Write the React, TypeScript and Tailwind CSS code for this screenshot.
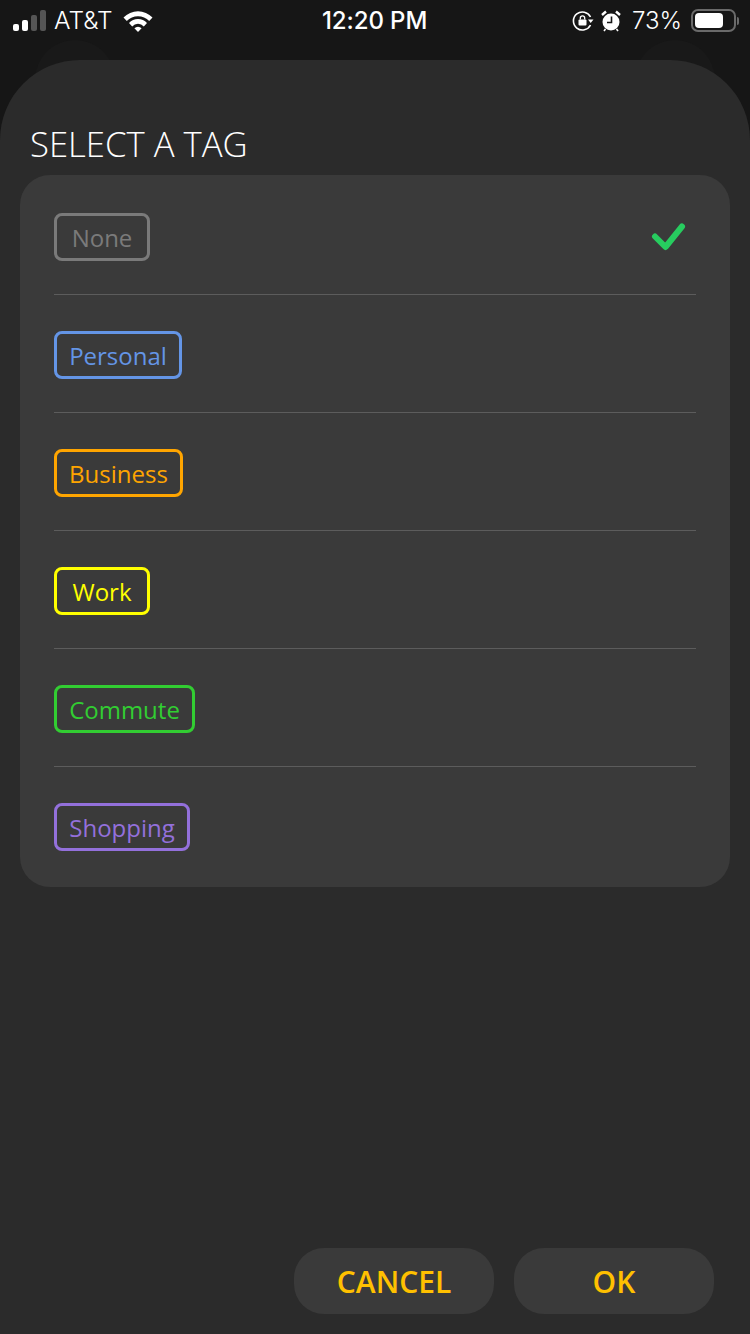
const tags = [
  { name: 'None', width: 'w-[96px]', color: 'border-[#7a7a7a] text-[#7a7a7a]', checked: true },
  { name: 'Personal', width: 'w-[128px]', color: 'border-[#6495e6] text-[#6495e6]' },
  { name: 'Business', width: 'w-[129px]', color: 'border-[#ffa500] text-[#ffa500]' },
  { name: 'Work', width: 'w-[96px]', color: 'border-[#ffff00] text-[#ffff00]' },
  { name: 'Commute', width: 'w-[141px]', color: 'border-[#32cd32] text-[#32cd32]' },
  { name: 'Shopping', width: 'w-[136px]', color: 'border-[#9370db] text-[#9370db]' },
]

function StatusBar() {
  return (
    <div className="h-[40px] pt-[1px] flex items-center justify-between text-white font-['Inter',sans-serif] relative">
      <div className="flex items-center pl-[13px]">
        <div className="flex items-end gap-[3px] h-[21px]">
          <div className="w-[6px] h-[7px] rounded-[2px] bg-white" />
          <div className="w-[6px] h-[11px] rounded-[2px] bg-white" />
          <div className="w-[6px] h-[16px] rounded-[2px] bg-[#555555]" />
          <div className="w-[6px] h-[21px] rounded-[2px] bg-[#555555]" />
        </div>
        <span className="ml-[8px] text-[24.5px] font-light leading-none">AT&amp;T</span>
        <svg className="ml-[10px]" width="30" height="22" viewBox="0 0 30 22">
          <path d="M0.5 7.5 A20 20 0 0 1 29.5 7.5 L26.2 11 A15.5 15.5 0 0 0 3.8 11 Z" fill="#fff" />
          <path d="M6 13 A12 12 0 0 1 24 13 L20.8 16.4 A7.8 7.8 0 0 0 9.2 16.4 Z" fill="#fff" />
          <path d="M11.4 18.2 A5 5 0 0 1 18.6 18.2 L15 22 Z" fill="#fff" />
        </svg>
      </div>
      <span className="absolute left-[322px] top-[7px] text-[24px] font-medium leading-[28px] tracking-[-0.1px]">12:20 PM</span>
      <div className="flex items-center">
        <svg width="22" height="22" viewBox="0 0 22 22" fill="none">
          <path d="M18.5 7 A9 9 0 1 0 18.5 15" stroke="#fff" strokeWidth="1.6" />
          <path d="M16 9.5 L21.5 9.5 L18.7 13 Z" fill="#fff" />
          <rect x="6.5" y="9.5" width="8" height="6" rx="1" fill="#fff" />
          <path d="M8.3 9.5 V8 a2.2 2.2 0 0 1 4.4 0 V9.5" stroke="#fff" strokeWidth="1.3" />
        </svg>
        <svg className="ml-[7px]" width="20" height="22" viewBox="0 0 20 22" fill="none">
          <circle cx="10" cy="12" r="8.5" fill="#fff" />
          <path d="M10.5 6.5 V12.5 H6" stroke="#161616" strokeWidth="1.6" />
          <path d="M1 5 L5 1.5 M19 5 L15 1.5" stroke="#fff" strokeWidth="2.4" />
          <path d="M4.5 19 L3 21 M15.5 19 L17 21" stroke="#fff" strokeWidth="1.6" />
        </svg>
        <span className="ml-[11px] text-[24px] font-light leading-none">73%</span>
        <div className="ml-[9px] w-[45px] h-[23px] rounded-[7px] border-2 border-[#6a6a6a] p-[2px]">
          <div className="w-[28px] h-full rounded-[4px] bg-white" />
        </div>
        <div className="ml-[1px] mr-[11px] w-[2px] h-[8px] rounded-r-full bg-[#6a6a6a]" />
      </div>
    </div>
  )
}

export default function App() {
  return (
    <div className="relative w-[750px] h-[1334px] bg-[#161616] overflow-hidden font-['Open_Sans',sans-serif]">
      <StatusBar />
      {/* faint edge of the sheet stacked behind this one */}
      <div className="absolute left-[35px] top-[40px] w-[80px] h-[60px] rounded-t-[40px] bg-[#191919]" />
      <div className="absolute left-[635px] top-[40px] w-[80px] h-[60px] rounded-t-[40px] bg-[#191919]" />
      <div className="relative mt-[20px] h-[1274px] bg-[#2b2b2b] rounded-t-[80px] px-[20px] flex flex-col">
        <h1 className="mt-[61px] text-[34.7px] font-light leading-[46px] pl-[10px] text-white">SELECT A TAG</h1>
        <div className="mt-[8px] bg-[#3a3a3a] rounded-[30px] px-[34px] pt-[2px]">
          {tags.map((tag, i) => (
            <div
              key={tag.name}
              className={`flex items-center justify-between pt-[36px] ${i < tags.length - 1 ? 'pb-[33px] border-b border-[#5c5c5c]' : 'pb-[36px]'}`}
            >
              <div className={`${tag.width} h-[48px] pt-[1px] border-[3px] rounded-[8px] flex items-center justify-center text-[24px] leading-none ${tag.color}`}>
                {tag.name}
              </div>
              {tag.checked && (
                <svg className="mr-[9px]" width="36" height="30" viewBox="0 0 36 30" fill="none">
                  <path d="M4 14.5 L14.5 25 L31 4.5" stroke="#27cc5f" strokeWidth="6" strokeLinecap="round" strokeLinejoin="round" />
                </svg>
              )}
            </div>
          ))}
        </div>
        <div className="mt-auto mb-[20px] flex justify-end gap-[20px] pr-[16px]">
          <button className="w-[200px] h-[66px] rounded-[30px] bg-[#3a3a3a] text-[#ffc000] text-[30px] font-semibold">CANCEL</button>
          <button className="w-[200px] h-[66px] rounded-[30px] bg-[#3a3a3a] text-[#ffc000] text-[30px] font-semibold">OK</button>
        </div>
      </div>
    </div>
  )
}
